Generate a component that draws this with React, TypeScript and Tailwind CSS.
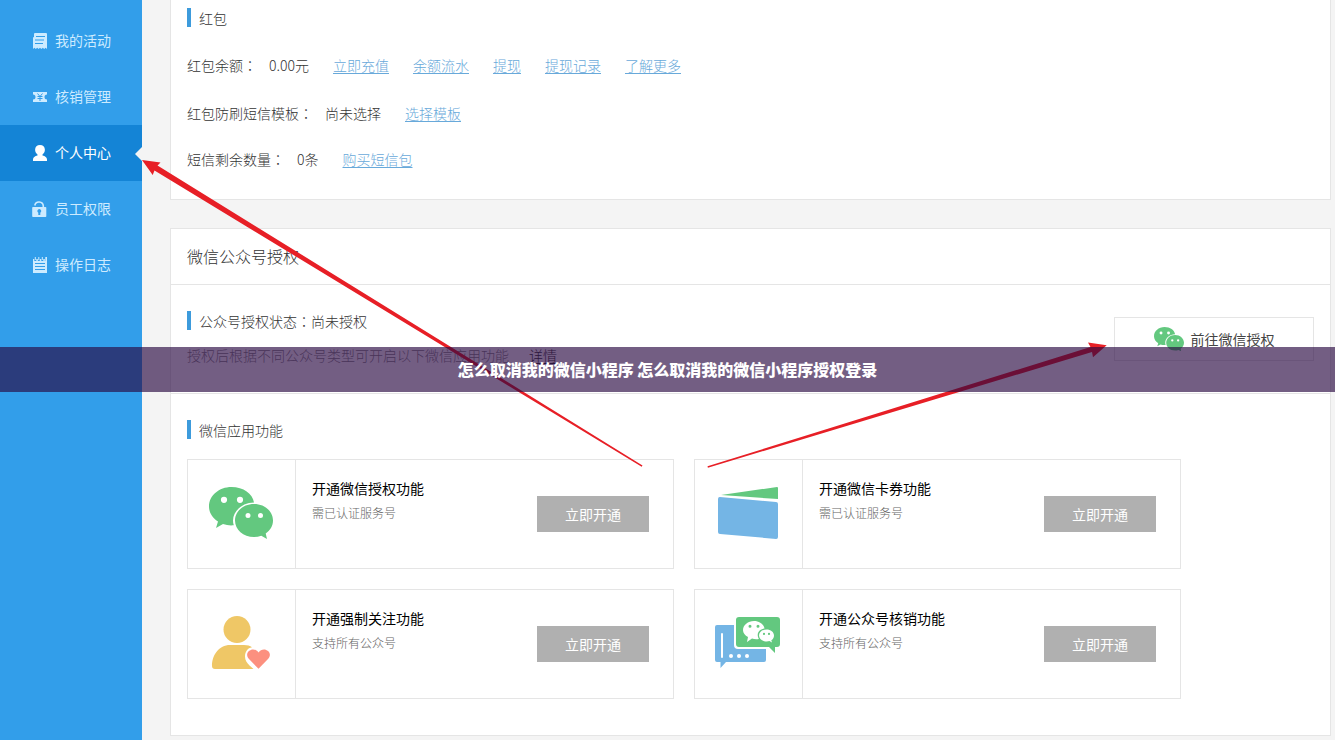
import React from 'react'

type IconProps = {
    className?: string
}

const ActivityIcon = () => (
    <svg width="16" height="16" viewBox="0 0 16 16" fill="currentColor" aria-hidden="true">
        <path fillRule="evenodd" d="M3 0h11a1 1 0 0 1 1 1v15l-1.400-1.200-1.400 1.200-1.400-1.200-1.400 1.200L8 14.800 6.600 16l-1.400-1.200L3.800 16l-1.400-1.200L1 16V4.500L2 4V1a1 1 0 0 1 1-1zM4 3v1h9V3zM3 6.500v1h9v-1zM3 10v1h8v-1z" />
    </svg>
)

const TicketIcon = () => (
    <svg width="16" height="16" viewBox="0 0 16 16" fill="none" aria-hidden="true">
        <path fill="currentColor" d="M1 3h14v2.500a2.500 2.500 0 0 0 0 5V13H1v-2.500a2.500 2.500 0 0 0 0-5z" />
        <path stroke="#329eea" strokeWidth="1" d="M5.500 4.500 8 7.500l2.500-3M8 7.500v4.500M5.500 7.500h5M5.500 9.500h5" />
    </svg>
)

const UserIcon = () => (
    <svg width="16" height="16" viewBox="0 0 16 16" fill="currentColor" aria-hidden="true">
        <path d="M8 0c3 0 4.900 2 4.900 4.800 0 2-1 3.800-2.400 4.700v.9c2.700.7 4.500 1.800 4.500 4.100V16H1v-1.500c0-2.300 1.800-3.400 4.500-4.100v-.9C4.100 8.600 3.100 6.800 3.100 4.800 3.100 2 5 0 8 0z" />
    </svg>
)

const LockIcon = () => (
    <svg width="16" height="16" viewBox="0 0 16 16" aria-hidden="true">
        <path fill="none" stroke="currentColor" strokeWidth="1.600" d="M2.800 4.500A4.300 4.300 0 0 1 11.300 5v3" />
        <path fill="currentColor" fillRule="evenodd" d="M1 6h12.500a.8.8 0 0 1 .8.8v8.400a.8.8 0 0 1-.8.8H1a.8.8 0 0 1-.8-.8V6.800A.8.8 0 0 1 1 6zm6.300 2a2 2 0 0 0-1 3.700V14h2v-2.300a2 2 0 0 0-1-3.700z" />
    </svg>
)

const LogIcon = () => (
    <svg width="16" height="16" viewBox="0 0 16 16" fill="currentColor" aria-hidden="true">
        <path fillRule="evenodd" d="M1 2h1.300v2h2V2h1.500v2h2V2h1.500v2h2V2h1.500v2H15v12H1zM3 6v1h10V6zM3 9v1h10V9zM3 12v1h10v-1z" />
        <path d="M2.800 0h1v3h-1zM6.300 0h1v3h-1zM9.800 0h1v3h-1zM13.300 0H15v4h-1.700z" />
    </svg>
)

const WechatIcon = ({ className }: IconProps) => (
    <svg className={className} viewBox="0 0 64 52" fill="#63c87f" aria-hidden="true">
        <path fillRule="evenodd" d="M22.500 0C34.500 0 43.500 6.500 45 15.500 33.500 15.500 24 24 24 33.500c0 1.700.2 3.300.8 4.800-3.800.3-7.300 0-10.800-1.200L7 41l2-6.600C3.400 31 0 25.600 0 19.500 0 8.500 10 0 22.500 0zM15 9.700a3.100 3.100 0 1 0 0 6.200 3.100 3.100 0 0 0 0-6.200zm16 0a3.100 3.100 0 1 0 0 6.200 3.100 3.100 0 0 0 0-6.200z" />
        <path fillRule="evenodd" d="M45 17c10.700 0 19 7.300 19 16.500 0 5.600-3 9.900-7.300 13L58 52l-5.700-3.200c-2.400.8-4.700 1.200-7.300 1.200-10.700 0-19-7.300-19-16.500S34.300 17 45 17zm-6 9a2.500 2.500 0 1 0 0 5 2.500 2.500 0 0 0 0-5zm12.500 0a2.500 2.500 0 1 0 0 5 2.500 2.500 0 0 0 0-5z" />
    </svg>
)

const CardIcon = () => (
    <svg width="60" height="52" viewBox="0 0 60 52" aria-hidden="true">
        <path fill="#63c87f" d="M3 8 59 0q1 0 1 1v11z" />
        <path fill="#74b5e5" d="M2 10l56 5q2 .2 2 2v33q0 2-2 1.900L2 47q-2-.2-2-2V12q0-2.200 2-2z" />
    </svg>
)

const FollowIcon = () => (
    <svg width="60" height="54" viewBox="0 0 60 54" aria-hidden="true">
        <circle cx="26" cy="13.500" r="13.500" fill="#efc766" />
        <path fill="#efc766" d="M19 29h14c3.500 0 6 .8 8 2.300-4.500.7-7 4.700-7 9.200 0 4 2 6.500 4.500 9L42.500 53H4q-3 0-3-3c0-11 7-21 18-21z" />
        <path fill="#fc907f" d="M47.500 52.800 38 43c-2.500-2.500-2.500-6 0-8 2.700-2.600 7.300-2 9.500 1.500 2.200-3.500 6.800-4.100 9.500-1.500 2.500 2 2.500 5.500 0 8z" />
    </svg>
)

const VerifyIcon = () => (
    <svg width="65" height="52" viewBox="0 0 65 52" aria-hidden="true">
        <path fill="#74b5e5" d="M2 8h17v20q0 4 4 4h28v11q0 2-2 2H11l-5.500 6V45H2q-2 0-2-2V10q0-2 2-2z" />
        <path stroke="#fff" strokeWidth="2" strokeLinecap="round" d="M7 17v23" />
        <circle cx="16" cy="39" r="2" fill="#fff" />
        <circle cx="24" cy="39" r="2" fill="#fff" />
        <circle cx="32" cy="39" r="2" fill="#fff" />
        <path fill="#63c87f" d="M24 0h38q3 0 3 3v24q0 3-3 3h-2v6l-6-6H24q-3 0-3-3V3q0-3 3-3z" />
        <path fill="#fff" fillRule="evenodd" d="M39 4c5.500 0 9.800 3.300 10.500 7.600-4.500.2-7.500 3.500-6.600 7.900.2.900.5 1.700 1 2.400-2.300.4-4.700.3-6.900-.4L32 25l1-5c-3-1.600-5-4-5-6.800C28 8 33 4 39 4zm-4 3.700a1.500 1.500 0 1 0 0 3 1.500 1.500 0 0 0 0-3zm8 0a1.500 1.500 0 1 0 0 3 1.500 1.500 0 0 0 0-3z" />
        <path fill="#fff" fillRule="evenodd" d="M51.500 12.500c4.200 0 7.500 2.600 7.500 6 0 2.100-1 3.700-2.700 4.800l.7 2.200-2.600-1.400c-5.300 1.300-10.400-1.500-10.400-5.600 0-3.400 3.300-6 7.500-6zm-2.500 3.300a1.100 1.100 0 1 0 0 2.200 1.100 1.100 0 0 0 0-2.200zm5 0a1.100 1.100 0 1 0 0 2.200 1.100 1.100 0 0 0 0-2.200z" />
    </svg>
)

const menus = [
    { title: "我的活动", icon: <ActivityIcon /> },
    { title: "核销管理", icon: <TicketIcon /> },
    { title: "个人中心", icon: <UserIcon />, active: true },
    { title: "员工权限", icon: <LockIcon /> },
    { title: "操作日志", icon: <LogIcon /> },
]

const features = [
    { title: "开通微信授权功能", desc: "需已认证服务号", icon: <WechatIcon className="w-16" /> },
    { title: "开通微信卡券功能", desc: "需已认证服务号", icon: <CardIcon /> },
    { title: "开通强制关注功能", desc: "支持所有公众号", icon: <FollowIcon /> },
    { title: "开通公众号核销功能", desc: "支持所有公众号", icon: <VerifyIcon /> },
]

type TextProps = {
    children: React.ReactNode
}

// the TC face centres the full-width colon
const Colon = () => <span className="font-['Noto_Sans_CJK_TC',sans-serif]">：</span>

const SectionTitle = ({ children }: TextProps) => (
    <h3 className="flex h-[19px] items-center gap-2 leading-[18px]">
        <span className="h-[19px] w-1 bg-[#3d9bdc]"></span>
        <span>{children}</span>
    </h3>
)

const TextLink = ({ children }: TextProps) => (
    <a href="#" className="text-[#68a9da] underline underline-offset-2">{children}</a>
)

const Sidebar = () => (
    <nav className="w-[142px] shrink-0 bg-[#329eea] pt-[13px]">
        {menus.map((menu) => (
            <a
                key={menu.title}
                href="#"
                className={
                    menu.active
                        ? "relative flex h-14 items-center gap-[7px] bg-[#1484d6] pl-8 leading-[18px] font-normal text-white"
                        : "flex h-14 items-center gap-[7px] pl-8 leading-[18px] font-normal text-[#cdebff]"
                }
            >
                {menu.icon}
                <span className="pb-0.5">{menu.title}</span>
                {menu.active && (
                    <svg className="absolute top-[22px] right-0" width="7" height="14" viewBox="0 0 7 14" aria-hidden="true">
                        <path fill="#f4f4f4" d="M7 0v14L0 7z" />
                    </svg>
                )}
            </a>
        ))}
    </nav>
)

const Arrows = () => (
    <svg className="pointer-events-none absolute top-0 left-0" width="1335" height="740" viewBox="0 0 1335 740" fill="#e71f26" aria-hidden="true">
        <path d="M142 160l18.500 2.500-3 3L642.500 465.500l-.8 1.200L154.500 170.500l-1.800 4.500z" />
        <path d="M1106.700 345.300 1088 342.500l2.500 4.500L707.500 466.300l.4 1.400L1092 352l1 5.200z" />
    </svg>
)

const App = () => {
    return (
        <div className="relative flex min-h-screen overflow-hidden bg-[#f4f4f4] font-['Noto_Sans_CJK_SC',sans-serif] text-sm font-light text-[#333]">
            <Sidebar />
            <main className="flex min-w-0 grow flex-col gap-7 pr-1 pb-1 pl-7">
                <section className="border border-t-0 border-[#e5e5e5] bg-white px-4 pt-2 pb-[30px]">
                    <SectionTitle>红包</SectionTitle>
                    <div className="mt-7 flex gap-6 leading-5">
                        <p className="flex gap-3"><span>红包余额<Colon /></span><span>0.00元</span></p>
                        <TextLink>立即充值</TextLink>
                        <TextLink>余额流水</TextLink>
                        <TextLink>提现</TextLink>
                        <TextLink>提现记录</TextLink>
                        <TextLink>了解更多</TextLink>
                    </div>
                    <div className="mt-7 flex gap-6 leading-5">
                        <p className="flex gap-3"><span>红包防刷短信模板<Colon /></span><span>尚未选择</span></p>
                        <TextLink>选择模板</TextLink>
                    </div>
                    <div className="mt-[26px] flex gap-6 leading-5">
                        <p className="flex gap-3"><span>短信剩余数量<Colon /></span><span>0条</span></p>
                        <TextLink>购买短信包</TextLink>
                    </div>
                </section>

                <section className="border border-[#e5e5e5] bg-white">
                    <h2 className="border-b border-[#e5e5e5] px-4 text-base leading-[55px]">微信公众号授权</h2>
                    <div className="flex items-start justify-between border-b border-[#e5e5e5] px-4 pb-7">
                        <div className="pt-[26px]">
                            <SectionTitle>公众号授权状态<Colon />尚未授权</SectionTitle>
                            <p className="mt-[15px] flex gap-5 leading-5 text-[#888]">
                                授权后根据不同公众号类型可开启以下微信应用功能
                                <a href="#" className="text-[#333] underline underline-offset-2">详情</a>
                            </p>
                        </div>
                        <button type="button" className="mt-8 flex h-11 w-[200px] items-center justify-center gap-[7px] border border-[#e5e5e5] font-normal text-[#444]">
                            <WechatIcon className="w-[30px]" />
                            前往微信授权
                        </button>
                    </div>
                    <div className="px-4 pt-[26px] pb-9">
                        <SectionTitle>微信应用功能</SectionTitle>
                        <div className="mt-5 grid max-w-[994px] grid-cols-2 gap-5">
                            {features.map((feature) => (
                                <div key={feature.title} className="flex h-[110px] border border-[#e5e5e5]">
                                    <div className="flex w-[108px] shrink-0 items-center justify-center border-r border-[#e5e5e5] pr-0.5 pb-0.5">
                                        {feature.icon}
                                    </div>
                                    <div className="grow px-4 pt-[18px]">
                                        <h4 className="leading-5 font-normal text-black">{feature.title}</h4>
                                        <p className="mt-[5px] text-xs leading-5 text-[#666]">{feature.desc}</p>
                                    </div>
                                    <button type="button" className="mr-6 h-9 w-28 shrink-0 self-center bg-[#b0b0b0] font-normal text-white">立即开通</button>
                                </div>
                            ))}
                        </div>
                    </div>
                </section>
            </main>
            <Arrows />
            <div className="absolute inset-x-0 top-[347px] bg-[#280740]/65 text-center text-base leading-[45px] font-black text-white">
                怎么取消我的微信小程序 怎么取消我的微信小程序授权登录
            </div>
        </div>
    )
}

export default App
